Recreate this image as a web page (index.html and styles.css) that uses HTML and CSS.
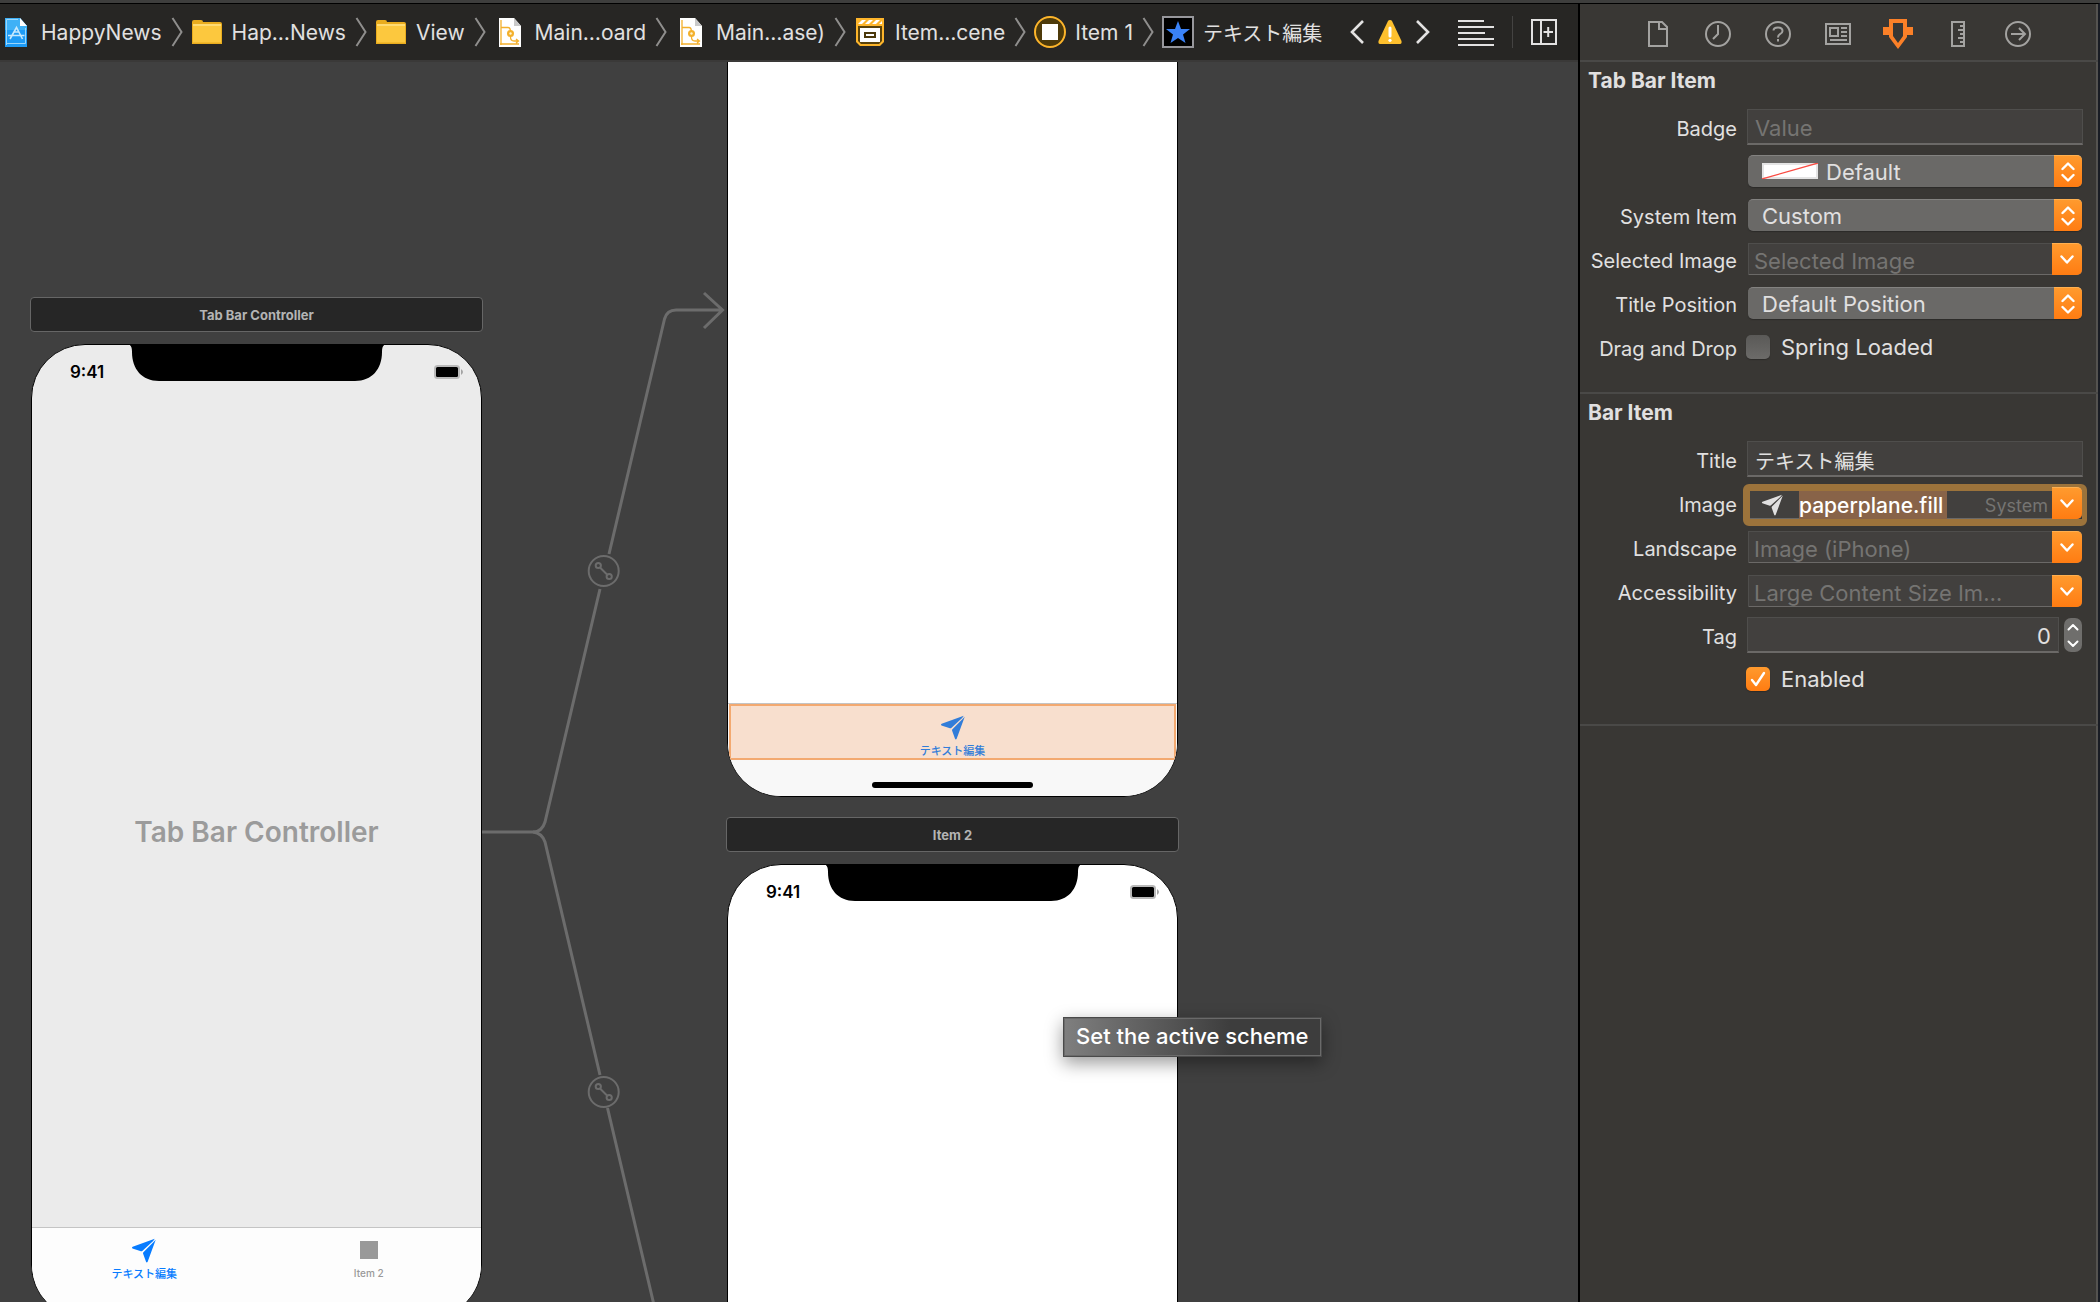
FILE: index.html
```html
<!DOCTYPE html>
<html lang="en">
<head>
<meta charset="utf-8">
<title>HappyNews – Main.storyboard</title>
<link rel="stylesheet" href="styles.css">
</head>
<body>
<svg class="defs" aria-hidden="true">
  <defs>
    <symbol id="plane" viewBox="0 0 26 26"><path d="M24.200 .8 1.200 9.200Q-.2 10 1 10.900L9.800 13.800Q10.600 14 11.200 13.400L22.500 3.200Z"/><path d="M25.200 1.800 16.800 24.600Q16 26 15.100 24.800L12 16.200Q11.900 15.400 12.400 14.800L23.200 3.900Z"/></symbol>
    <symbol id="sep" viewBox="0 0 12 30"><path d="M1.500 1 10.500 15 1.500 29" fill="none" stroke="#8f8e8d" stroke-width="2"/></symbol>
    <symbol id="folder" viewBox="0 0 30 24"><path d="M0 2Q0 0 2 0H9Q11 0 11 2H28Q30 2 30 4V24H0Z" fill="#e9ac1e"/><path d="M1 5H29V22.500H1Z" fill="#fcc83e"/><path d="M1 4H29V6H1Z" fill="#ffdb73"/></symbol>
    <symbol id="doc" viewBox="0 0 22 29"><path d="M0 0H15L22 8V29H0Z" fill="#fff"/><path d="M15 0V8H22Z" fill="#c9c9c9"/><path d="M2 27V2M1 26H20M2 9.500H9Q11.500 9.500 11.500 14V19Q11.500 23 15 23H19M17 21 19.500 23 17 25" fill="none" stroke="#f3b02c" stroke-width="1.300"/><circle cx="11.500" cy="15.500" r="3.500" fill="#f3b02c"/><circle cx="11.500" cy="15.500" r="1.200" fill="#fff3d0"/></symbol>
    <symbol id="updown" viewBox="0 0 14 20"><path d="M1.500 7 7 1.500 12.500 7M1.500 13 7 18.500 12.500 13" fill="none" stroke="#fff" stroke-width="2.400" stroke-linecap="round" stroke-linejoin="round"/></symbol>
    <symbol id="down" viewBox="0 0 14 10"><path d="M1.500 1.500 7 7.500 12.500 1.500" fill="none" stroke="#fff" stroke-width="2.400" stroke-linecap="round" stroke-linejoin="round"/></symbol>
    <symbol id="notch" viewBox="0 0 262 37"><path d="M0 0C5 0 6 3 6 8C6 25 16 37 33 37H229C246 37 256 25 256 8C256 3 257 0 262 0Z"/></symbol>
    <symbol id="battery" viewBox="0 0 30 14"><rect width="26" height="14" rx="3.500" fill="#b9b9b9"/><path d="M27 4Q31 7 27 10Z" fill="#a4a4a4"/><rect x="2" y="2" width="22" height="10" rx="1.500"/></symbol>
  </defs>
</svg>
<div class="app">
  <main class="editor">
    <header class="jumpbar">
      <nav aria-label="Path">
        <ol class="crumbs">
          <li><span class="icon"><svg width="22" height="29" viewBox="0 0 22 29"><path d="M0 0H15L22 8V29H0Z" fill="#1e9bf5"/><path d="M0 0H15L22 8V12H0Z" fill="#3fb1f6"/><path d="M15 0V8H22Z" fill="#fff"/><path d="M1.500 27V1.500H13M1 25.500H20.500V10" fill="none" stroke="#9ad6fb"/><path d="M5 21 11.500 9.500 17.500 21M3 17.500H19.500M8.500 14 14 14" fill="none" stroke="#c5e8fd" stroke-width="1.600"/></svg></span><a href="#">HappyNews</a></li>
          <li><svg class="sep"><use href="#sep"/></svg><span class="icon"><svg width="30" height="24"><use href="#folder"/></svg></span><a href="#">Hap…News</a></li>
          <li><svg class="sep"><use href="#sep"/></svg><span class="icon"><svg width="30" height="24"><use href="#folder"/></svg></span><a href="#">View</a></li>
          <li><svg class="sep"><use href="#sep"/></svg><span class="icon"><svg width="22" height="29"><use href="#doc"/></svg></span><a href="#">Main…oard</a></li>
          <li><svg class="sep"><use href="#sep"/></svg><span class="icon"><svg width="22" height="29"><use href="#doc"/></svg></span><a href="#">Main…ase)</a></li>
          <li><svg class="sep"><use href="#sep"/></svg><span class="icon"><svg width="28" height="28" viewBox="0 0 28 28"><path d="M0 0H28V24L24 28H4L0 24Z" fill="#fdb52b"/><path d="M2 8H26V23L23 26H5L2 23Z" fill="#5a430c"/><path d="M2 6 6 2H10L6 6ZM9 6 13 2H17L13 6ZM16 6 20 2H24L20 6ZM23 6 26 3V6Z" fill="#fff"/><path d="M4 10H24V24H4Z" fill="#fff"/><rect x="9" y="15" width="10" height="4" fill="#fff" stroke="#4c390b" stroke-width="2"/></svg></span><a href="#">Item…cene</a></li>
          <li><svg class="sep"><use href="#sep"/></svg><span class="icon"><svg width="32" height="32" viewBox="0 0 32 32"><circle cx="16" cy="16" r="15" fill="#4d3a0a" stroke="#fdb52b" stroke-width="2"/><path d="M8 8H24V24H8Z" fill="#fff"/></svg></span><a href="#">Item 1</a></li>
          <li><svg class="sep"><use href="#sep"/></svg><span class="icon"><svg width="32" height="32" viewBox="0 0 32 32"><rect x="1" y="1" width="30" height="30" stroke="#97979c" stroke-width="2"/><path d="M16 5 19 13H28L21 18.500 23.500 27 16 22 8.500 27 11 18.500 4 13H13Z" fill="#3a82f7"/></svg></span><a href="#" class="ja" lang="ja">テキスト編集</a></li>
        </ol>
      </nav>
      <div class="tools">
        <button aria-label="Previous issue"><svg width="15" height="26" viewBox="0 0 15 26"><path d="M13 2 2 13 13 24" fill="none" stroke="#e3e2e2" stroke-width="2.600"/></svg></button>
        <button aria-label="Issues"><svg width="24" height="24" viewBox="0 0 24 24"><path d="M12 0Q13.500 0 14 1L23.500 21Q24 24 22 24H2Q0 24 .5 21L10 1Q10.500 0 12 0Z" fill="#fdbf2d"/><path d="M12 8V16" stroke="#fff" stroke-width="3" stroke-linecap="round"/><circle cx="12" cy="20.300" r="1.600" fill="#fff"/></svg></button>
        <button aria-label="Next issue"><svg width="15" height="26" viewBox="0 0 15 26"><path d="M2 2 13 13 2 24" fill="none" stroke="#e3e2e2" stroke-width="2.600"/></svg></button>
        <button class="lines" aria-label="Editor options"><svg width="36" height="27" viewBox="0 0 36 27"><path d="M0 2H26M0 8H36M0 14H27M0 20H36M0 26H36" stroke="#e3e2e2" stroke-width="2"/></svg></button>
        <span class="rule"></span>
        <button aria-label="Add editor"><svg width="26" height="26" viewBox="0 0 26 26"><path d="M1 1H25V25H1ZM10 1V25M12.500 13H22M17.200 8V18" fill="none" stroke="#e3e2e2" stroke-width="2"/></svg></button>
      </div>
    </header>

    <section class="canvas" aria-label="Storyboard">
      <svg class="segues" fill="none" stroke="#6c6c6c" stroke-width="3">
        <path d="M482 770H533Q542 770 545 760L600 527M609 492 664.500 257Q667 248 676 248H723M704 231 722.500 248 704 266"/>
        <path d="M533 770Q542 771 545 780L600 1013M607.500 1046 658 1260"/>
        <g stroke-width="2"><circle cx="603.700" cy="509" r="15"/><path d="M600 505.500 607 512.500"/><circle cx="598.300" cy="503.500" r="2.600"/><circle cx="609.200" cy="514.500" r="2.600"/></g>
        <g stroke-width="2"><circle cx="603.700" cy="1030" r="15"/><path d="M600 1026.500 607 1033.500"/><circle cx="598.300" cy="1024.500" r="2.600"/><circle cx="609.200" cy="1035.500" r="2.600"/></g>
      </svg>

      <article class="scene scene-tabs">
        <h2 class="scene-title">Tab Bar Controller</h2>
        <div class="device gray">
          <svg class="notch"><use href="#notch"/></svg>
          <div class="status"><span>9:41</span><svg width="30" height="14"><use href="#battery"/></svg></div>
          <p class="placeholder">Tab Bar Controller</p>
          <div class="tabbar pale">
            <div class="tab active"><svg width="26" height="25"><use href="#plane"/></svg><span class="ja" lang="ja">テキスト編集</span></div>
            <div class="tab"><svg width="26" height="25" viewBox="0 0 26 25"><path d="M4 3H22V21H4Z"/></svg><span>Item 2</span></div>
          </div>
        </div>
      </article>

      <article class="scene scene-one" aria-label="Item 1">
        <div class="device">
          <div class="tabbar">
            <div class="tab selected"><svg width="26" height="25"><use href="#plane"/></svg><span class="ja" lang="ja">テキスト編集</span></div>
          </div>
          <span class="home"></span>
        </div>
      </article>

      <article class="scene scene-two">
        <h2 class="scene-title">Item 2</h2>
        <div class="device">
          <svg class="notch"><use href="#notch"/></svg>
          <div class="status"><span>9:41</span><svg width="30" height="14"><use href="#battery"/></svg></div>
        </div>
      </article>

      <div class="tooltip" role="tooltip">Set the active scheme</div>
    </section>
  </main>

  <aside class="inspector">
    <nav class="inspector-tabs" aria-label="Inspectors">
      <button aria-label="File"><svg width="30" height="30" viewBox="0 0 30 30"><path d="M6 3H19L24 8V27H6ZM16 4V10H24"/></svg></button>
      <button aria-label="History"><svg width="30" height="30" viewBox="0 0 30 30"><circle cx="15" cy="15" r="12"/><path d="M15 6V15L10 20"/></svg></button>
      <button aria-label="Quick Help"><svg width="30" height="30" viewBox="0 0 30 30"><circle cx="15" cy="15" r="12"/><path d="M10.500 11.500Q10.500 8.500 15 8.500 19.500 8.500 19.500 12 19.500 14 17 15.200 15 16.200 15 18.500M15 20V22.500"/></svg></button>
      <button aria-label="Identity"><svg width="30" height="30" viewBox="0 0 30 30"><path d="M3 5H27V25H3ZM7 9H15V17H7ZM18 9H24M18 13H24M18 17H24M7 21H24"/></svg></button>
      <button aria-label="Attributes" class="current"><svg width="30" height="30" viewBox="0 0 30 30"><path d="M6 0H24V8H30V16H24V18L15 30 6 18V16H0V8H6ZM10 4V17L15 24 20 17V4Z" fill="#fb8028" fill-rule="evenodd" stroke="none"/></svg></button>
      <button aria-label="Size"><svg width="30" height="30" viewBox="0 0 30 30"><path d="M9 3H21V27H9ZM17 7H21M15 11H21M17 15H21M15 19H21M17 23H21"/></svg></button>
      <button aria-label="Connections"><svg width="30" height="30" viewBox="0 0 30 30"><circle cx="15" cy="15" r="12"/><path d="M8 15H22M16 9 22 15 16 21"/></svg></button>
    </nav>

    <form class="group">
      <h2>Tab Bar Item</h2>
      <div class="row"><label for="badge">Badge</label><input id="badge" class="field" type="text" placeholder="Value"></div>
      <div class="row"><span></span><div class="popup swatched"><select aria-label="Badge colour"><option>Default</option></select><svg class="swatch" viewBox="0 0 56 16"><path d="M0 0H56V16H0Z" fill="#e4e4e4"/><path d="M2 2H54V14H2Z" fill="#fff"/><path d="M0 16 56 0" stroke="#fa4b42" stroke-width="1.300"/></svg><span class="cap"><svg width="14" height="20"><use href="#updown"/></svg></span></div></div>
      <div class="row"><label for="system">System Item</label><div class="popup"><select id="system"><option>Custom</option></select><span class="cap"><svg width="14" height="20"><use href="#updown"/></svg></span></div></div>
      <div class="row"><label for="selimg">Selected Image</label><div class="combo"><input id="selimg" type="text" placeholder="Selected Image"><button type="button" aria-label="Choose selected image"><svg width="14" height="10"><use href="#down"/></svg></button></div></div>
      <div class="row"><label for="titlepos">Title Position</label><div class="popup"><select id="titlepos"><option>Default Position</option></select><span class="cap"><svg width="14" height="20"><use href="#updown"/></svg></span></div></div>
      <div class="row"><span class="name">Drag and Drop</span><label class="check"><input type="checkbox">Spring Loaded</label></div>
    </form>

    <form class="group">
      <h2>Bar Item</h2>
      <div class="row"><label for="title">Title</label><input id="title" class="field ja" lang="ja" type="text" value="テキスト編集"></div>
      <div class="row"><label for="image">Image</label><div class="combo focused"><svg class="glyph" width="23" height="22"><use href="#plane"/></svg><input id="image" type="text" value="paperplane.fill"><span class="hint">System</span><button type="button" aria-label="Choose image"><svg width="14" height="10"><use href="#down"/></svg></button></div></div>
      <div class="row"><label for="landscape">Landscape</label><div class="combo"><input id="landscape" type="text" placeholder="Image (iPhone)"><button type="button" aria-label="Choose landscape image"><svg width="14" height="10"><use href="#down"/></svg></button></div></div>
      <div class="row"><label for="access">Accessibility</label><div class="combo"><input id="access" type="text" placeholder="Large Content Size Im…"><button type="button" aria-label="Choose large content image"><svg width="14" height="10"><use href="#down"/></svg></button></div></div>
      <div class="row"><label for="tag">Tag</label><div class="number"><input id="tag" class="field" type="text" inputmode="numeric" value="0"><div class="stepper"><button type="button" aria-label="Increase"><svg width="12" height="8" viewBox="0 0 12 8"><path d="M1.500 6.500 6 2 10.500 6.500"/></svg></button><button type="button" aria-label="Decrease"><svg width="12" height="8" viewBox="0 0 12 8"><path d="M1.500 1.500 6 6 10.500 1.500"/></svg></button></div></div></div>
      <div class="row"><span></span><label class="check"><input type="checkbox" checked>Enabled<svg class="tick" width="16" height="16" viewBox="0 0 16 16"><path d="M2 9 6 14 14 2" fill="none" stroke="#fff" stroke-width="2.400" stroke-linecap="round" stroke-linejoin="round"/></svg></label></div>
    </form>
  </aside>
</div>
</body>
</html>
```
FILE: styles.css
```css
* { box-sizing: border-box; }

body {
  margin: 0;
  background: #404040;
  color: #e1e0e0;
  font-family: Inter, "Noto Sans CJK JP", sans-serif;
  font-size: 22px;
}

h2, p, ol { margin: 0; padding: 0; }
a { color: inherit; text-decoration: none; }
button { margin: 0; padding: 0; border: 0; background: none; color: inherit; font: inherit; display: flex; align-items: center; justify-content: center; }
input, select { margin: 0; font: inherit; color: inherit; }
svg { display: block; flex: none; }
.defs { position: absolute; width: 0; height: 0; }
.ja { font-family: "Noto Sans CJK JP", sans-serif; }

.app {
  display: grid;
  grid-template-columns: minmax(0, 1fr) 522px;
  height: 100vh;
  border-top: 3px solid #3e3e3d;
  overflow: hidden;
}

/* Jump bar */
.editor { display: flex; flex-direction: column; min-width: 0; min-height: 0; border-top: 1px solid #000; }
.jumpbar {
  display: flex;
  align-items: center;
  justify-content: space-between;
  height: 58px;
  flex: none;
  padding: 0 21px 0 1px;
  background: #272624;
  border-bottom: 2px solid #3a3938;
}
.crumbs { display: flex; list-style: none; white-space: nowrap; font-size: 21px; }
.crumbs li { display: flex; align-items: center; }
.crumbs .icon { display: flex; justify-content: center; width: 30px; margin-right: 10px; }
.crumbs .icon svg { margin: 0 -1px; }
.crumbs .ja { font-size: 20px; }
.sep { width: 12px; height: 30px; margin: 0 9px; }
.tools { display: flex; align-items: center; gap: 13px; }
.lines { margin-left: 15px; }
.rule { width: 1px; height: 32px; margin: 0 5px; background: #444342; }

/* Storyboard canvas */
.canvas { position: relative; flex: 1; min-height: 0; overflow: hidden; background: #404040; }
.segues { position: absolute; inset: 0; width: 100%; height: 100%; }
.scene { position: absolute; display: flex; flex-direction: column; align-items: center; gap: 12px; width: 453px; }
.scene-tabs { left: 30px; top: 235px; }
.scene-one { left: 726px; top: -240px; }
.scene-two { left: 726px; top: 755px; }
.scene-title {
  width: 100%;
  height: 35px;
  border: 1px solid #666;
  border-radius: 4px;
  background: #262626;
  color: #b4b4b4;
  font-size: 13px;
  line-height: 35px;
  text-align: center;
}
.device {
  position: relative;
  display: flex;
  flex-direction: column;
  width: 451px;
  height: 975px;
  border: 1px solid #000;
  border-radius: 54px;
  background: #fff;
  color: #000;
  overflow: hidden;
}
.gray { background: #ebebeb; }
.notch { position: absolute; top: -1px; left: 50%; width: 262px; height: 37px; margin-left: -131px; }
.status { display: flex; justify-content: space-between; align-items: center; height: 54px; padding: 0 17px 0 38px; font-size: 17px; font-weight: 600; }
.placeholder { flex: 1; display: flex; align-items: center; justify-content: center; padding-top: 38px; color: #9b9b9b; font-size: 28px; font-weight: 600; }
.tabbar { display: flex; height: 93px; margin-top: auto; border-top: 1px solid #c4c4c4; background: #f8f8f8; flex: none; align-items: flex-start; }
.pale { height: 91px; background: #fdfdfd; }
.tab { flex: 1; display: flex; flex-direction: column; align-items: center; gap: 3px; height: 56px; padding-top: 10px; color: #999; fill: currentColor; font-size: 10px; line-height: 14px; font-weight: 500; }
.tab .ja { font-size: 11px; }
.active { color: #087cff; }
.selected { margin: 0 1px; padding-top: 9px; background: #f8dfce; border: 2px solid #f3a970; color: #327dd9; }
.home { position: absolute; bottom: 8px; left: 50%; width: 161px; height: 6px; margin-left: -81px; border-radius: 3px; background: #000; }
.tooltip {
  position: absolute;
  left: 1063px;
  top: 955px;
  padding: 0 13px 2px 12px;
  border: 1px solid #4a4a4a;
  box-shadow: inset 0 0 0 1px #6a6a6a, 0 6px 18px rgba(0, 0, 0, .4);
  background: linear-gradient(90deg, #7f7f7f, #3d3d3d 65%);
  color: #fff;
  font-weight: 500;
  line-height: 36px;
  white-space: nowrap;
}

/* Inspector */
.inspector { border-top: 1px solid #000; border-left: 2px solid #000; border-right: 2px solid #191c24; background: #393734; box-shadow: inset -2px 0 #555350; }
.inspector-tabs { display: flex; justify-content: center; gap: 30px; height: 58px; padding: 3px 2px 0 0; border-bottom: 2px solid #4a4947; }
.inspector-tabs svg { fill: none; stroke: #a3a2a0; stroke-width: 2; }
.group { padding: 0 15px 23px 8px; border-bottom: 2px solid #4a4947; }
.group h2 { height: 43px; line-height: 38px; font-size: 21px; }
.row { display: grid; grid-template-columns: 149px minmax(0, 1fr); column-gap: 10px; align-items: center; height: 44px; }
.row > label:first-child, .name { justify-self: end; padding-top: 3px; font-size: 20px; white-space: nowrap; }
.row > :nth-child(2) { min-width: 0; }
::placeholder { color: #757472; opacity: 1; }
.field {
  width: 100%;
  height: 36px;
  padding: 3px 7px 0;
  border: 1px solid #4f4e4c;
  border-bottom: 2px solid #6b6967;
  background: #42403e;
  outline: 0;
}
input.ja { font-size: 20px; }
.popup { position: relative; height: 32px; margin: 0 1px; }
.popup select {
  appearance: none;
  width: 100%;
  height: 32px;
  padding: 0 40px 0 14px;
  border: 0;
  border-top: 1px solid #838280;
  border-radius: 5px;
  background: #6a6967;
  box-shadow: 0 1px 1px #2c2b29;
}
.swatched select { padding-left: 78px; }
.swatch { position: absolute; left: 14px; top: 8px; width: 56px; height: 16px; }
.cap, .combo button { background: linear-gradient(#ff9a2e, #ff7c12); border-top: 1px solid #ffb050; }
.cap { position: absolute; right: 0; top: 0; display: flex; align-items: center; justify-content: center; width: 28px; height: 32px; border-radius: 0 5px 5px 0; pointer-events: none; }
.combo { display: flex; height: 32px; margin: 0 1px; align-items: center; background: #42403e; box-shadow: inset 1px 1px #4f4e4c, inset 0 -1px #6b6967; border-radius: 0 5px 5px 0; }
.combo input { flex: 1; min-width: 0; height: 32px; padding: 4px 6px 0; border: 0; background: none; outline: 0; }
.combo button { width: 30px; height: 32px; border-radius: 0 5px 5px 0; }
.focused { position: relative; box-shadow: inset 0 -1px #6b6967; }
.focused::after { content: ""; position: absolute; inset: -3px -5px -7px -5px; border: 6px solid #9c733b; border-width: 7px 5px 7px 7px; border-radius: 6px; pointer-events: none; }
.focused button { position: relative; z-index: 1; }
.glyph { fill: #e1e0e0; margin: 4px 15px 0 13px; }
.combo.focused input { flex: none; width: 148px; height: 28px; padding: 1px 0 0; margin-top: 4px; background: #886348; color: #fff; font-size: 21px; font-weight: 500; }
.hint { margin: 4px 4px 0 auto; color: #757472; font-size: 18px; }
.number { display: flex; gap: 5px; padding-right: 1px; align-items: center; }
.number input { flex: 1; min-width: 0; text-align: right; }
.stepper { display: flex; flex-direction: column; width: 18px; height: 34px; border-radius: 7px; background: #6f6e6c; }
.stepper button { flex: 1; }
.stepper path { fill: none; stroke: #fff; stroke-width: 2; stroke-linecap: round; stroke-linejoin: round; }
.check { position: relative; display: flex; align-items: center; gap: 11px; }
.check input { appearance: none; flex: none; width: 24px; height: 24px; margin-left: -1px; border-radius: 5px; background: linear-gradient(#5a5957, #6c6b69); box-shadow: 0 1px 1px #2c2b29; }
.check input:checked { background: linear-gradient(#ff9a2e, #ff7c12); }
.tick { position: absolute; left: 3px; top: 50%; margin-top: -8px; }
```
